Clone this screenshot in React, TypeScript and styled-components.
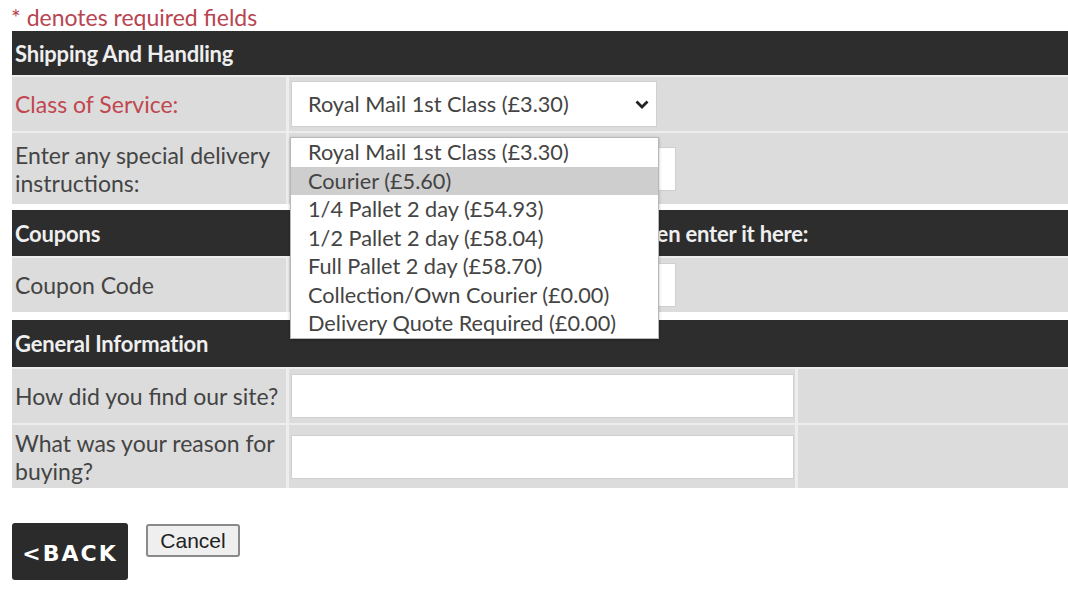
import styled, { createGlobalStyle } from "styled-components"

const GlobalStyle = createGlobalStyle`
    body {
        margin: 0;
        background: #fff;
        font-family: Lato, "Open Sans", sans-serif;
        color: #444;
    }
`

const shippingOptions = [
    "Royal Mail 1st Class (£3.30)",
    "Courier (£5.60)",
    "1/4 Pallet 2 day (£54.93)",
    "1/2 Pallet 2 day (£58.04)",
    "Full Pallet 2 day (£58.70)",
    "Collection/Own Courier (£0.00)",
    "Delivery Quote Required (£0.00)",
]

export default function App() {
    return (
        <>
            <GlobalStyle />
            <StyledPage>
                <StyledRequired>* denotes required fields</StyledRequired>

                <StyledSection gapAfter="6px">
                    <StyledHeader height="44px">Shipping And Handling</StyledHeader>
                    <StyledRow height="54px">
                        <StyledLabel required>Class of Service:</StyledLabel>
                        <StyledCell>
                            <StyledSelectWrap>
                                <StyledSelect>
                                    <span>{shippingOptions[0]}</span>
                                    <svg width="16" height="10" viewBox="0 0 16 10">
                                        <path d="M2.5 2.5 L8 8 L13.5 2.5" fill="none" stroke="#222" strokeWidth="2.8" />
                                    </svg>
                                </StyledSelect>
                                <StyledListBox>
                                    {shippingOptions.map((o, i) => (
                                        <StyledOption key={o} active={i === 1}>{o}</StyledOption>
                                    ))}
                                </StyledListBox>
                            </StyledSelectWrap>
                        </StyledCell>
                    </StyledRow>
                    <StyledRow height="71px">
                        <StyledLabel>Enter any special delivery instructions:</StyledLabel>
                        <StyledCell>
                            <StyledInput width="385px" />
                        </StyledCell>
                    </StyledRow>
                </StyledSection>

                <StyledSection gapAfter="8px">
                    <StyledHeader height="46px">
                        <span>Coupons</span>
                        <StyledHeaderNote>If you have received a coupon code, then enter it here:</StyledHeaderNote>
                    </StyledHeader>
                    <StyledRow height="54px">
                        <StyledLabel>Coupon Code</StyledLabel>
                        <StyledCell>
                            <StyledInput width="385px" />
                        </StyledCell>
                    </StyledRow>
                </StyledSection>

                <StyledSection gapAfter="0">
                    <StyledHeader height="47px">General Information</StyledHeader>
                    <StyledRow height="54px" wide>
                        <StyledLabel>How did you find our site?</StyledLabel>
                        <StyledCell>
                            <StyledInput width="503px" />
                        </StyledCell>
                        <StyledCell />
                    </StyledRow>
                    <StyledRow height="63px" wide>
                        <StyledLabel>What was your reason for buying?</StyledLabel>
                        <StyledCell>
                            <StyledInput width="503px" />
                        </StyledCell>
                        <StyledCell />
                    </StyledRow>
                </StyledSection>

                <StyledActions>
                    <StyledBackButton>&lt;BACK</StyledBackButton>
                    <StyledCancelButton>Cancel</StyledCancelButton>
                </StyledActions>
            </StyledPage>
        </>
    )
}

const StyledPage = styled.div`
    padding-left: 12px;
    width: 1056px;
`

const StyledRequired = styled.div`
    color: #b84550;
    font-size: 23px;
    height: 31px;
    line-height: 34px;
    margin-left: -1px;
`

const StyledSection = styled.div<{ gapAfter: string }>`
    display: flex;
    flex-direction: column;
    gap: 2px;
    background: #ededed;
    margin-bottom: ${(p) => p.gapAfter};
    position: relative;
`

const StyledHeader = styled.div<{ height: string }>`
    display: flex;
    align-items: center;
    height: ${(p) => p.height};
    background: #2d2d2d;
    color: #efefef;
    font-weight: 700;
    font-size: 22px;
    letter-spacing: -0.2px;
    padding-left: 3px;

    span {
        width: 276px;
        flex-shrink: 0;
    }
`

const StyledHeaderNote = styled.div`
    white-space: nowrap;
`

const StyledRow = styled.div<{ height: string; wide?: boolean }>`
    display: grid;
    grid-template-columns: ${(p) => (p.wide ? "274px 506px 1fr" : "274px 1fr")};
    gap: 3px;
    min-height: ${(p) => p.height};
`

const StyledLabel = styled.div<{ required?: boolean }>`
    background: #dcdcdc;
    display: flex;
    align-items: center;
    padding: 0 3px;
    font-size: 23px;
    line-height: 28px;
    color: ${(p) => (p.required ? "#c0474f" : "#444")};
`

const StyledCell = styled.div`
    background: #dcdcdc;
    display: flex;
    align-items: center;
    padding-left: 2px;
`

const StyledInput = styled.div<{ width: string }>`
    width: ${(p) => p.width};
    height: 44px;
    box-sizing: border-box;
    background: #fff;
    border: 1px solid #d0d0d0;
`

const StyledSelectWrap = styled.div`
    position: relative;
`

const StyledSelect = styled.div`
    width: 366px;
    height: 46px;
    box-sizing: border-box;
    background: #fff;
    border: 1px solid #d0d0d0;
    display: flex;
    align-items: center;
    justify-content: space-between;
    padding: 0 6px 0 16px;
    font-size: 21.7px;
    color: #444;
`

const StyledListBox = styled.div`
    position: absolute;
    top: 56px;
    left: -1px;
    width: 367px;
    background: #fff;
    border: 1px solid #b8b8b8;
    box-shadow: 0 1px 3px rgba(0, 0, 0, 0.25);
    z-index: 10;
`

const StyledOption = styled.div<{ active?: boolean }>`
    height: 28.5px;
    line-height: 28.5px;
    padding-left: 17px;
    font-size: 21.7px;
    color: #444;
    white-space: nowrap;
    background: ${(p) => (p.active ? "#cecece" : "#fff")};
`

const StyledActions = styled.div`
    display: flex;
    align-items: flex-start;
    gap: 18px;
    margin-top: 35px;
`

const StyledBackButton = styled.div`
    width: 116px;
    height: 57px;
    background: #2b2b2b;
    border-radius: 3px;
    color: #fff;
    font-family: "DejaVu Sans", sans-serif;
    font-weight: 700;
    font-size: 22px;
    letter-spacing: 2px;
    padding-top: 4px;
    box-sizing: border-box;
    display: flex;
    align-items: center;
    justify-content: center;
`

const StyledCancelButton = styled.div`
    width: 94px;
    height: 33px;
    box-sizing: border-box;
    background: #efefef;
    border: 2px solid #8a8a8a;
    border-radius: 3px;
    font-family: "Liberation Sans", Arial, sans-serif;
    font-size: 21px;
    color: #222;
    display: flex;
    align-items: center;
    justify-content: center;
    margin-top: 1px;
`
